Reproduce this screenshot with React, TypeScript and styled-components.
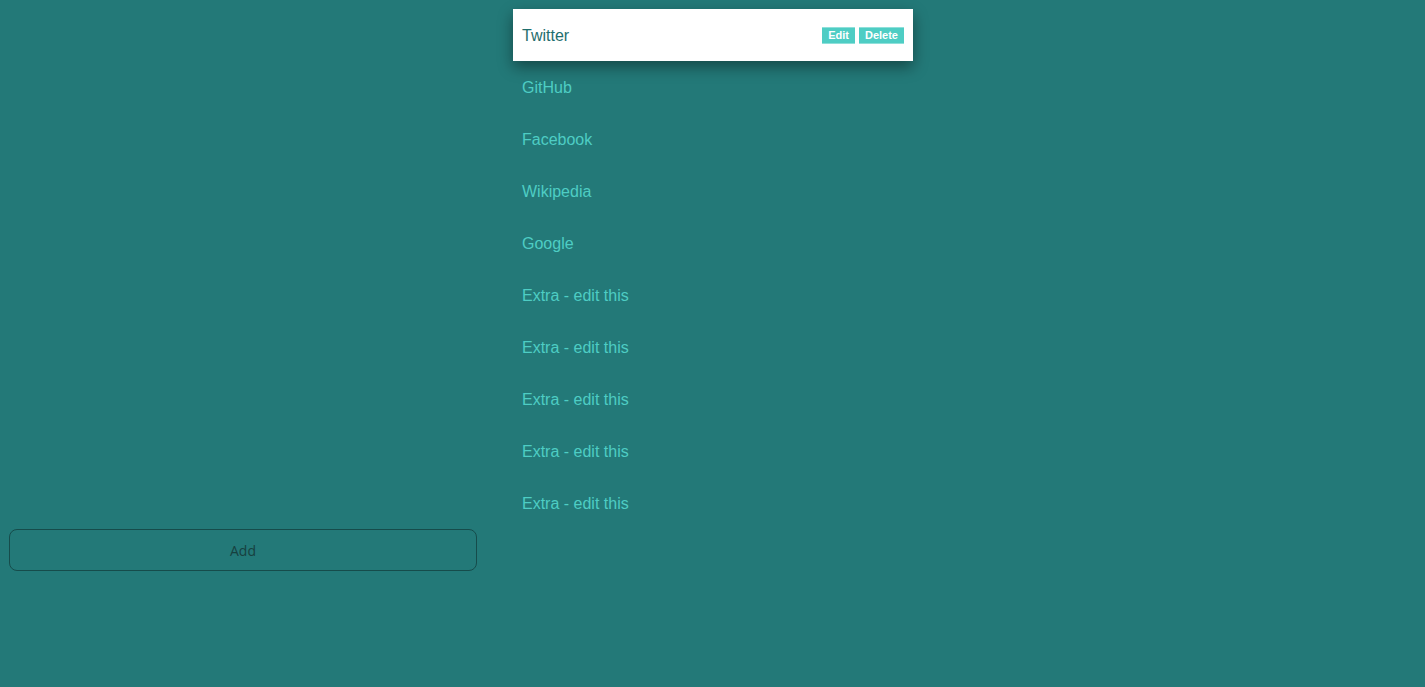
import styled, { createGlobalStyle } from 'styled-components';

const links = [
  'Twitter',
  'GitHub',
  'Facebook',
  'Wikipedia',
  'Google',
  'Extra - edit this',
  'Extra - edit this',
  'Extra - edit this',
  'Extra - edit this',
  'Extra - edit this',
];

export default function App() {
  return (
    <>
      <GlobalStyle />
      <Layout>
        <List>
          {links.map((name, i) => (
            <Item key={i} $active={i === 0}>
              <Label>{name}</Label>
              {i === 0 && (
                <Actions>
                  <SmallButton>Edit</SmallButton>
                  <SmallButton>Delete</SmallButton>
                </Actions>
              )}
            </Item>
          ))}
        </List>
        <AddButton>Add</AddButton>
      </Layout>
    </>
  );
}

const GlobalStyle = createGlobalStyle`
  html, body {
    margin: 0;
    height: 100%;
    background: #237978;
  }
  #root {
    min-height: 100%;
  }
`;

const Layout = styled.div`
  display: grid;
  grid-template-columns: 468px 400px;
  grid-template-rows: auto 42px;
  column-gap: 36px;
  padding: 9px;
`;

const List = styled.ul`
  grid-column: 2;
  grid-row: 1;
  list-style: none;
  margin: 0;
  padding: 0;
`;

const Item = styled.li<{ $active: boolean }>`
  display: flex;
  align-items: center;
  justify-content: space-between;
  height: 52px;
  padding: 0 9px;
  box-sizing: border-box;
  font-family: 'Liberation Sans', Arial, sans-serif;
  font-size: 16px;
  color: ${(p) => (p.$active ? '#1f6e6e' : '#4ecdc4')};
  background: ${(p) => (p.$active ? '#ffffff' : 'transparent')};
  box-shadow: ${(p) => (p.$active ? '0 6px 14px rgba(0, 0, 0, 0.4)' : 'none')};
  position: relative;
`;

const Label = styled.span`
  padding-top: 2px;
`;

const Actions = styled.div`
  display: flex;
  gap: 4px;
`;

const SmallButton = styled.button`
  height: 17px;
  padding: 0 6px;
  border: none;
  border-top: 1px solid #8fe0da;
  border-bottom: 1px solid #8fe0da;
  background: #4ecdc4;
  color: #ffffff;
  font-family: 'Liberation Sans', Arial, sans-serif;
  font-size: 11px;
  font-weight: bold;
  cursor: pointer;
`;

const AddButton = styled.button`
  grid-column: 1;
  grid-row: 2;
  height: 42px;
  border: 1px solid #164c4b;
  border-radius: 8px;
  background: transparent;
  color: #17403f;
  font-family: 'Open Sans', 'Noto Sans', sans-serif;
  font-size: 14px;
  cursor: pointer;
`;
